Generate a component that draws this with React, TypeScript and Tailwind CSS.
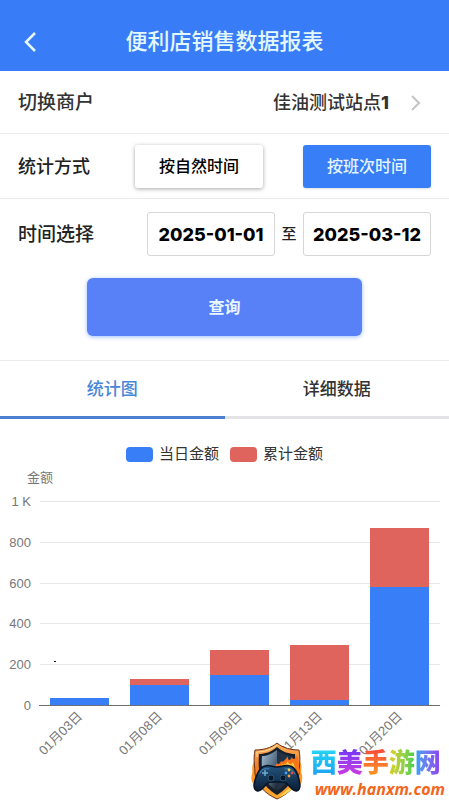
import React, { useState } from 'react';

type StatMode = 'natural' | 'shift';
type Tab = 'chart' | 'detail';

interface DayAmount {
  date: string;
  day: number;
  total: number;
}

const DATA: DayAmount[] = [
  { date: '01月03日', day: 33, total: 0 },
  { date: '01月08日', day: 98, total: 29 },
  { date: '01月09日', day: 147, total: 123 },
  { date: '01月13日', day: 24, total: 269 },
  { date: '01月20日', day: 578, total: 291 },
];

const TICKS = [
  { value: 1000, label: '1 K' },
  { value: 800, label: '800' },
  { value: 600, label: '600' },
  { value: 400, label: '400' },
  { value: 200, label: '200' },
  { value: 0, label: '0' },
];

// Plot area inside the chart's viewBox
const PLOT = { left: 40, right: 440, top: 33, bottom: 237 };
const BAR_WIDTH = 59;

const yOf = (value: number) =>
  Math.round(PLOT.bottom - (value / 1000) * (PLOT.bottom - PLOT.top));

const BarChart: React.FC = () => {
  const band = (PLOT.right - PLOT.left) / DATA.length;

  return (
    <svg viewBox="0 0 449 332" className="block w-full" role="img" aria-label="金额">
      <text x="27" y="14" fontSize="13" fill="#777777">
        金额
      </text>
      {TICKS.map((tick) => (
        <g key={tick.value}>
          <rect
            x={PLOT.left}
            y={yOf(tick.value)}
            width={PLOT.right - PLOT.left}
            height="1"
            fill="#e6e6e8"
          />
          <text
            x="31"
            y={yOf(tick.value) + 5}
            fontSize="13"
            fill="#777777"
            textAnchor="end"
          >
            {tick.label}
          </text>
        </g>
      ))}
      {DATA.map((item, i) => {
        const center = PLOT.left + band * (i + 0.5);
        const dayTop = yOf(item.day);
        const totalTop = yOf(item.day + item.total);
        return (
          <g key={item.date}>
            <rect
              x={center - 30}
              y={totalTop}
              width={BAR_WIDTH}
              height={dayTop - totalTop}
              fill="#df645e"
            />
            <rect
              x={center - 30}
              y={dayTop}
              width={BAR_WIDTH}
              height={PLOT.bottom - dayTop}
              fill="#387ef7"
            />
            <text
              transform={`translate(${center + 3} 249) rotate(-45)`}
              fontSize="13"
              fill="#777777"
              textAnchor="end"
            >
              {item.date}
            </text>
          </g>
        );
      })}
      <rect
        x={PLOT.left - 1}
        y={PLOT.bottom}
        width={PLOT.right - PLOT.left + 1}
        height="1"
        fill="#6e7079"
      />
      <rect x="54" y="193" width="2" height="1" fill="#111111" />
    </svg>
  );
};

const SiteBadge: React.FC = () => (
  <svg viewBox="0 0 52 58" className="h-[58px] w-[52px] shrink-0" aria-hidden="true">
    <defs>
      <linearGradient id="rim" x1="0" y1="0" x2="0" y2="1">
        <stop offset="0" stopColor="#f9b45a" />
        <stop offset="0.45" stopColor="#f07a2a" />
        <stop offset="1" stopColor="#ffae2e" />
      </linearGradient>
      <linearGradient id="steel" x1="0" y1="0" x2="1" y2="1">
        <stop offset="0" stopColor="#a9c0d2" />
        <stop offset="0.5" stopColor="#5d7890" />
        <stop offset="1" stopColor="#16202d" />
      </linearGradient>
      <linearGradient id="pad" x1="0" y1="0" x2="0" y2="1">
        <stop offset="0" stopColor="#235580" />
        <stop offset="1" stopColor="#0b1d35" />
      </linearGradient>
    </defs>
    <path d="M3 20 C0 25 2 28 1 32 C-1 38 2 43 6 46 L12 40 L8 22Z" fill="#ff9a24" />
    <path d="M49 20 C52 25 49 28 51 33 C52 39 50 44 45 47 L40 40 L45 22Z" fill="#ff9a24" />
    <path
      d="M26 1 C20 6 12 8 4 8 C2 18 4 25 4 32 C6 44 15 52 26 57 C37 52 46 44 48 32 C48 25 50 18 48 8 C40 8 32 6 26 1Z"
      fill="url(#rim)"
      stroke="#6e2f14"
      strokeWidth="1"
    />
    <path d="M26 3 C20 8 13 10 6 10 V15" fill="none" stroke="#ffe0a8" strokeWidth="1" />
    <path d="M26 5 C20 10 14 12 8 12 C7 27 7 42 26 53 C45 42 45 27 44 12 C38 12 32 10 26 5Z" fill="#17202c" />
    <path d="M26 8 C20 12 16 14 11 14 C10 28 11 40 26 49Z" fill="url(#steel)" />
    <path d="M26 8 V49 C41 40 42 28 41 14 C36 14 32 12 26 8Z" fill="#223244" />
    <path
      d="M20 27 C22 25 24 25 26 21 C27 23 29 22 30 19 C32 21 34 18 37 14 C36 18 39 20 41 15 C42 19 46 16 46 13 C48 18 47 24 49 29 L45 36 H20Z"
      fill="#f7741a"
    />
    <path
      d="M26 27 C29 26 30 24 31 22 C33 24 35 22 37 19 C37 22 40 24 42 20 C43 23 45 25 43 31 H26Z"
      fill="#ffc840"
    />
    <path d="M36 48 C38 46 41 45 43 41 C42 48 36 52 27 56Z" fill="#ffd258" />
    <path
      d="M14 24 C18 22 20 25 26 25 C32 25 34 22 39 24 C45 25 48 36 49 43 C49 50 44 50 41 47 C37 43 36 40 32 40 H20 C16 40 15 43 11 47 C8 50 3 50 3 43 C4 36 8 25 14 24Z"
      fill="url(#pad)"
      stroke="#071525"
      strokeWidth="1.5"
    />
    <path
      d="M9 31 C11 27 14 26 18 27 M34 27 C38 26 41 27 44 32"
      fill="none"
      stroke="#4f8dbd"
      strokeWidth="1"
      strokeLinecap="round"
    />
    <path d="M14 28 V34 M11 31 H17" stroke="#6fa9d0" strokeWidth="1.5" />
    <circle cx="20" cy="36" r="3" fill="#0a1625" stroke="#285677" />
    <circle cx="32" cy="36" r="3" fill="#0a1625" stroke="#285677" />
    <circle cx="38" cy="28" r="1.4" fill="#ffd13b" />
    <circle cx="41" cy="31" r="1.4" fill="#f04b3a" />
    <circle cx="35" cy="31" r="1.4" fill="#45a5f0" />
    <circle cx="38" cy="34" r="1.4" fill="#f5a13a" />
  </svg>
);

const SiteMark: React.FC = () => (
  <div className="absolute right-1 bottom-0 flex items-end gap-2">
    <SiteBadge />
    <div className="flex flex-col items-start">
      <p className="text-[26px] leading-8 font-black">
        <span className="bg-linear-to-b from-[#28d8f5] to-[#1e9df2] bg-clip-text text-transparent">西</span>
        <span className="bg-linear-to-b from-[#6d35f2] to-[#d634e0] bg-clip-text text-transparent">美</span>
        <span className="bg-linear-to-b from-[#f8443a] to-[#fb9a1c] bg-clip-text text-transparent">手</span>
        <span className="bg-linear-to-r from-[#d9d021] to-[#35cf54] bg-clip-text text-transparent">游</span>
        <span className="bg-linear-to-r from-[#1fa5f5] to-[#8d35ee] bg-clip-text text-transparent">网</span>
      </p>
      <a
        href="#"
        className="pl-1 font-['Open_Sans'] text-base leading-[21px] font-bold text-[#f3661c] italic"
      >
        www.hanxm.com
      </a>
    </div>
  </div>
);

const App: React.FC = () => {
  const [mode, setMode] = useState<StatMode>('shift');
  const [tab, setTab] = useState<Tab>('chart');
  const [start, setStart] = useState('2025-01-01');
  const [end, setEnd] = useState('2025-03-12');

  const modeClass = (active: boolean) =>
    active
      ? 'h-[43px] w-32 rounded-[3px] bg-[#387ef7] pt-0.5 text-base font-medium text-[#e4f4ff] shadow'
      : 'h-[43px] w-32 rounded-[3px] bg-white pt-0.5 text-base font-medium text-black shadow-[0_1px_4px_rgba(0,0,0,0.35)]';

  const tabClass = (active: boolean) =>
    active
      ? 'h-[58px] flex-1 border-b-3 border-[#4a80cf] pt-0.5 text-[17px] font-medium text-[#4a86d8]'
      : 'h-[58px] flex-1 border-b-3 border-[#e4e4e6] pt-0.5 text-[17px] font-medium text-[#333333]';

  const dateClass =
    "h-11 w-32 rounded-[3px] border border-[#d6d6d8] bg-white text-center font-['Inter'] text-lg font-extrabold text-black";

  return (
    <div className="relative bg-white font-['Liberation_Sans','Noto_Sans_CJK_SC',sans-serif] text-[#222222]">
      {/* Header */}
      <header className="flex h-[71px] items-center bg-[#387df7] px-6 pt-3">
        <button type="button" aria-label="返回" className="w-3 text-[#e8f8ff]">
          <svg viewBox="0 0 12 20" className="block h-5 w-3" fill="none" stroke="currentColor" strokeWidth="2.5">
            <path d="M11 1 L2 10 L11 19" />
          </svg>
        </button>
        <h1 className="flex-1 pr-3 text-center text-[22px] font-medium text-[#e4f8ff]">便利店销售数据报表</h1>
      </header>

      {/* Merchant */}
      <button
        type="button"
        className="flex h-[63px] w-full items-center border-b border-[#ececee] pt-0.5 pr-7 pl-[18px] font-medium text-[#333333]"
      >
        <span className="text-[19px]">切换商户</span>
        <span className="ml-auto text-lg">
          佳油测试站点<span className="font-['Inter'] font-extrabold">1</span>
        </span>
        <svg viewBox="0 0 10 16" className="ml-[22px] h-4 w-[10px]" fill="none" stroke="#c4c4c6" strokeWidth="2">
          <path d="M1 1 L8 8 L1 15" />
        </svg>
      </button>

      {/* Stat mode */}
      <div className="flex h-[65px] items-center border-b border-[#ececee] px-[18px]">
        <span className="pt-0.5 text-lg font-medium">统计方式</span>
        <div className="ml-auto flex gap-10">
          <button type="button" className={modeClass(mode === 'natural')} onClick={() => setMode('natural')}>
            按自然时间
          </button>
          <button type="button" className={modeClass(mode === 'shift')} onClick={() => setMode('shift')}>
            按班次时间
          </button>
        </div>
      </div>

      {/* Date range */}
      <div className="flex h-[70px] items-center px-[18px]">
        <label htmlFor="start" className="pt-0.5 text-[19px] font-medium">
          时间选择
        </label>
        <div className="ml-auto flex items-center">
          <input id="start" className={dateClass} value={start} onChange={(e) => setStart(e.target.value)} />
          <label htmlFor="end" className="w-7 text-center text-[15px] font-medium">
            至
          </label>
          <input id="end" className={dateClass} value={end} onChange={(e) => setEnd(e.target.value)} />
        </div>
      </div>

      <div className="flex justify-center border-b border-[#ececee] pt-[9px] pb-6">
        <button
          type="button"
          className="h-[58px] w-[275px] rounded-md bg-[#5880f7] pt-0.5 text-base font-bold text-[#e8f8ff] shadow-[0_1px_4px_rgba(56,125,247,0.5)]"
        >
          查询
        </button>
      </div>

      {/* Tabs */}
      <div className="flex" role="tablist">
        <button
          type="button"
          role="tab"
          aria-selected={tab === 'chart'}
          className={tabClass(tab === 'chart')}
          onClick={() => setTab('chart')}
        >
          统计图
        </button>
        <button
          type="button"
          role="tab"
          aria-selected={tab === 'detail'}
          className={tabClass(tab === 'detail')}
          onClick={() => setTab('detail')}
        >
          详细数据
        </button>
      </div>

      {/* Legend */}
      <div className="flex h-[49px] items-center justify-center gap-[11px] pt-[22px] text-[15px] text-[#333333]">
        <span className="flex items-center gap-[6px]">
          <i className="h-[15px] w-[27px] rounded bg-[#387ef7]" />
          当日金额
        </span>
        <span className="flex items-center gap-[6px]">
          <i className="h-[15px] w-[27px] rounded bg-[#df645e]" />
          累计金额
        </span>
      </div>

      <BarChart />
      <SiteMark />
    </div>
  );
};

export default App;
